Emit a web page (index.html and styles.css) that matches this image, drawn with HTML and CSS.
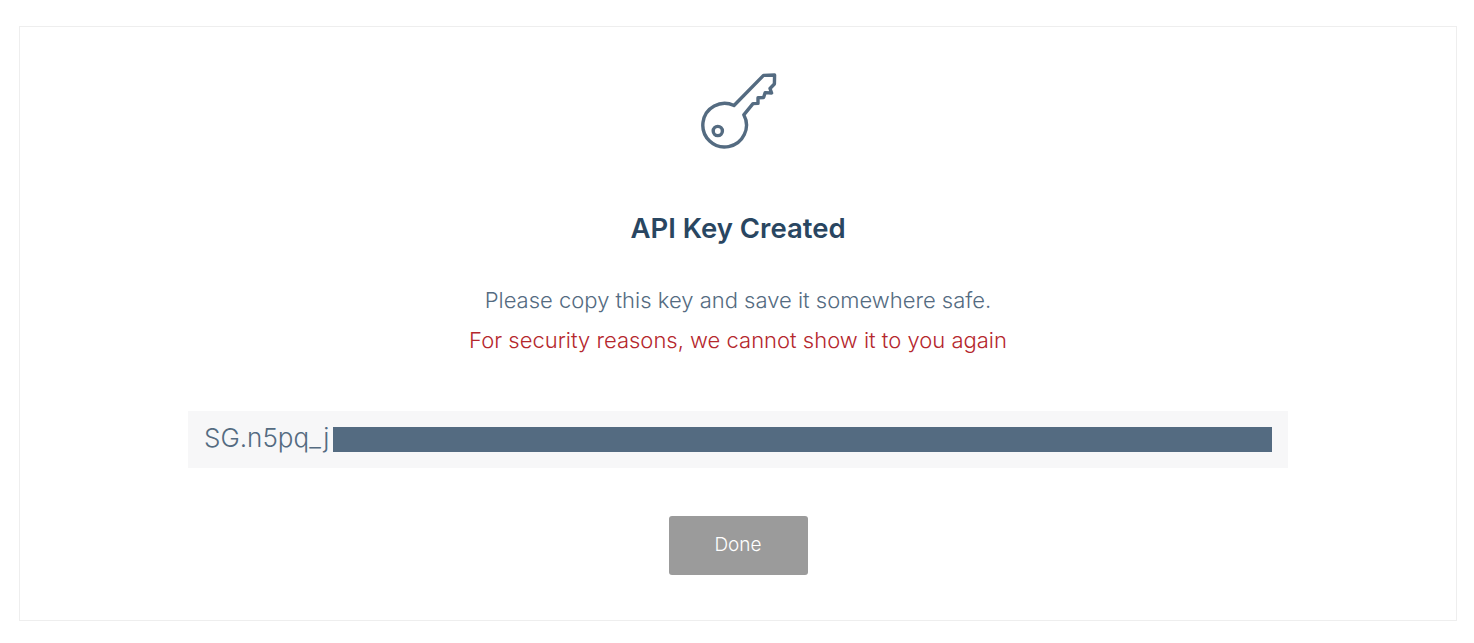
FILE: index.html
```html
<!DOCTYPE html>
<html lang="en">
<head>
    <meta charset="UTF-8">
    <title>API Key Created</title>
    <link rel="stylesheet" href="styles.css">
</head>
<body>
    <main class="card">
        <svg class="key-icon" width="80" height="80" viewBox="698 72 80 80" fill="none" stroke="#546b81" stroke-width="3.4" stroke-linejoin="round">
            <path d="M734 105.5 L763.5 75.4 L774.6 75 L774.4 84 L770 88.5 L771.6 93 L765.2 92.6 L763.6 97.6 L758 97.8 L758 103.4 L753 103.6 L743.8 114.8 A21.8 21.8 0 1 1 734 105.5 Z"/>
            <circle cx="717.8" cy="131" r="4.6"/>
        </svg>
        <h1 class="title">API Key Created</h1>
        <p class="note">Please copy this key and save it somewhere safe.</p>
        <p class="warning">For security reasons, we cannot show it to you again</p>
        <div class="key-box">
            <span class="key-text">SG.n5pq_j</span>
            <span class="key-mask"></span>
        </div>
        <button class="done-btn">Done</button>
    </main>
</body>
</html>
```

FILE: styles.css
```css
body {
    margin: 26px 17px 0 19px;
    background-color: #fff;
    font-family: Inter, "Liberation Sans", sans-serif;
}
.card {
    height: 595px;
    box-sizing: border-box;
    padding-top: 45px;
    border: 1px solid #eeeeee;
    display: flex;
    flex-direction: column;
    align-items: center;
}
.key-icon {
    display: block;
    margin-bottom: 56px;
}
.title {
    margin: 0 0 32px;
    font-size: 27.5px;
    line-height: 40px;
    font-weight: 600;
    color: #294661;
}
.note, .warning {
    margin: 0;
    font-size: 22px;
    line-height: 40px;
    font-weight: 300;
}
.note {
    color: #546b81;
}
.warning {
    color: #b5272d;
    margin-bottom: 51px;
}
.key-box {
    width: 1100px;
    height: 57px;
    box-sizing: border-box;
    padding: 0 16px 4px;
    display: flex;
    align-items: center;
    background-color: #f7f7f8;
}
.key-text {
    font-size: 26px;
    font-weight: 300;
    color: #546b81;
}
.key-mask {
    flex: 1;
    height: 25px;
    margin: 4px 0 0 4px;
    background-color: #546b81;
}
.done-btn {
    margin-top: 48px;
    width: 139px;
    height: 59px;
    padding: 0 0 3px;
    border: none;
    border-radius: 3px;
    background-color: #9b9b9b;
    color: #fff;
    font-family: inherit;
    font-size: 19px;
    font-weight: 300;
}
```
